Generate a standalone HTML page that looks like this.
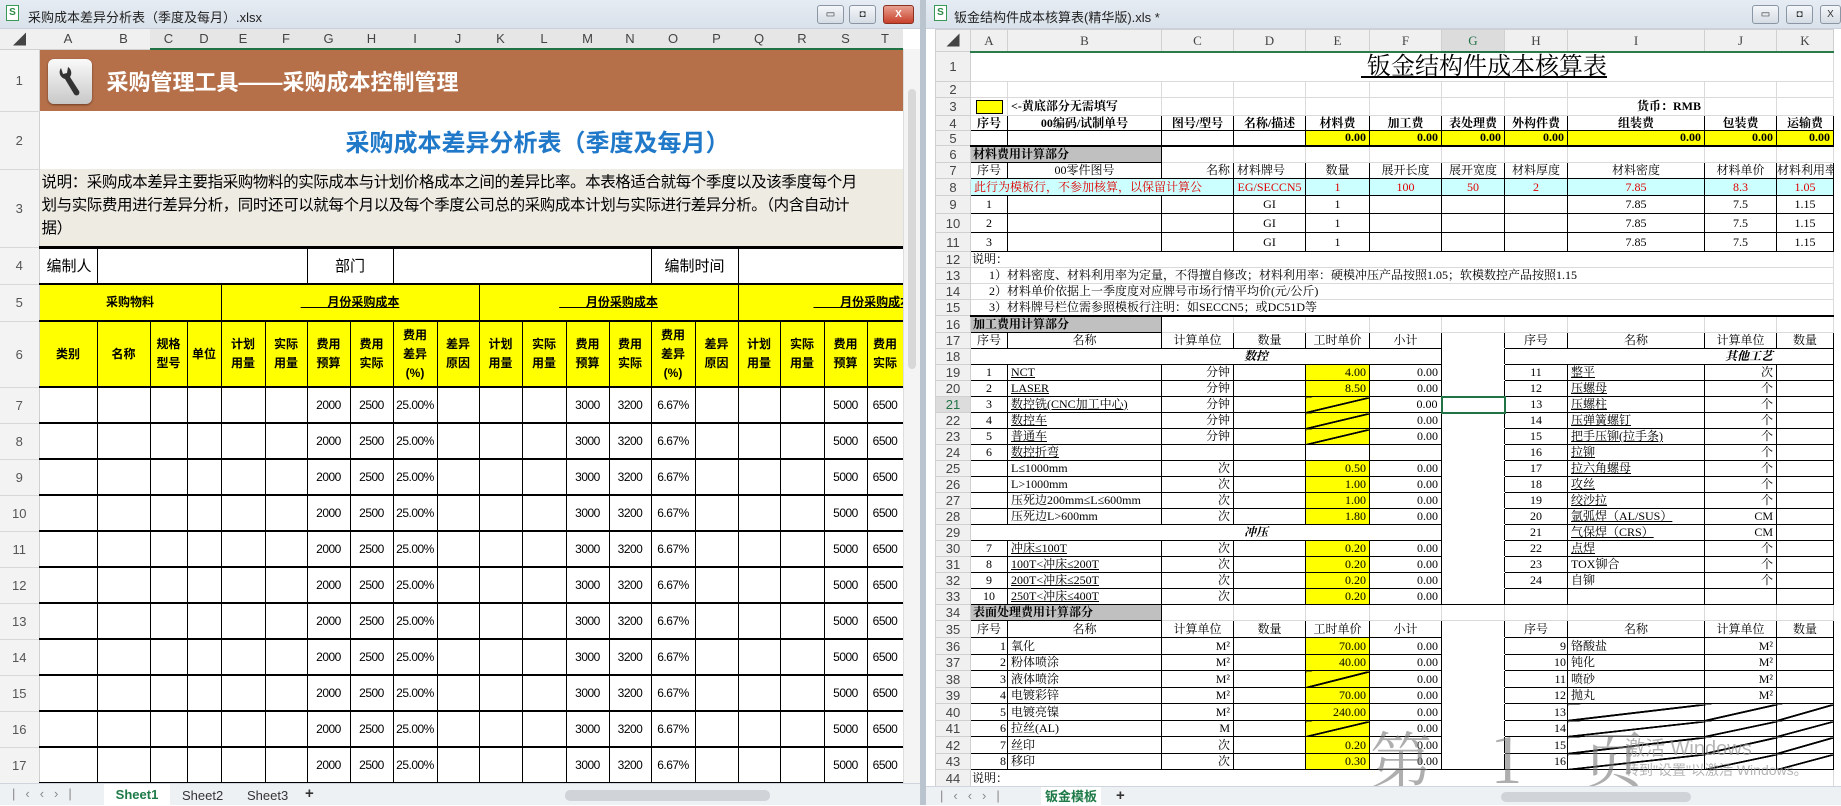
<!DOCTYPE html>
<html><head><meta charset="utf-8">
<style>
*{margin:0;padding:0;box-sizing:border-box}
body{width:1841px;height:805px;overflow:hidden;background:#fff;font-family:"Liberation Sans","Noto Sans CJK SC",sans-serif;position:relative}
.abs{position:absolute}
table{border-collapse:collapse;table-layout:fixed}
td{padding:0;overflow:hidden;white-space:nowrap;vertical-align:middle}
.tb{background:linear-gradient(#e6ecf3,#d9e1ea);height:29px;border-bottom:1px solid #c9d2dc}
.tb .t{position:absolute;left:28px;top:7px;font-size:13px;color:#222}
.xi{position:absolute;top:5px;width:13px;height:16px;background:#fff;border:1px solid #3a9a55;color:#2a8a45;font-size:10px;font-weight:bold;text-align:center;line-height:14px}
.btn{position:absolute;top:5px;width:27px;height:19px;border:1px solid #8a96a4;border-radius:3px;background:linear-gradient(#f5f7fa,#d5dce4);font-size:10px;text-align:center;line-height:17px;color:#333}
.btn.x{background:linear-gradient(#e8a090,#c8412c);color:#fff;font-weight:bold;border-color:#8a3020}
#L td{font-size:13px;text-align:center;color:#000}
#L .ch td{background:#f0f0f0;color:#444;font-size:13px;border-bottom:1px solid #d0d0d0}
#L .ch td.s{border-bottom:2px solid #217346;background:#e6e6e6}
#L td.rh{background:#f3f3f3;color:#555;border-right:1px solid #d0d0d0;border-bottom:1px solid #d8d8d8;font-size:13px}
#L .g td.c{border:1px solid #000;border-bottom:2px solid #000}
#L .y td.c{background:#ff0;font-weight:bold;border:1px solid #000;border-bottom:2px solid #000;font-size:12px;line-height:19px}
#L .d td.c{border-left:1px solid #000;border-right:1px solid #000;border-bottom:2px solid #000;font-size:12px;letter-spacing:-0.5px}
#R td{font-family:"Liberation Serif","Noto Serif CJK SC",serif;font-size:12px;border:1px solid #dadada;text-align:center;color:#000;line-height:13px}
#R .ch td{background:#f0f0f0;color:#444;border-color:#d0d0d0;font-size:13px}
#R td.rh{background:#f0f0f0;color:#444;border-color:#d0d0d0;font-size:13px;font-family:"Liberation Sans",sans-serif}
#R .b td:not(.rh){border:1px solid #000}
#R .yl{background:#ff0}
#R .r{text-align:right;padding-right:3px}
#R .l{text-align:left;padding-left:3px}
#R .u{text-decoration:underline}
#R .sec{background:#c0c0c0;font-weight:bold;text-align:left;padding-left:2px;border:1px solid #000;border-top:2px solid #000}
#R .tt{border-top:2px solid #000}
#R .sl{background:#ff0 linear-gradient(to bottom right,transparent 47%,#000 48%,#000 53%,transparent 54%)}
#R .dg{background:linear-gradient(to bottom right,transparent 47%,#000 48%,#000 53%,transparent 54%)}
#R .cy td:not(.rh){background:#ccffff;color:#e00000}
#R .hd td:not(.rh){font-weight:bold}
.tabs{background:#eef1f4;border-top:1px solid #cfd5dc;height:22px}
</style></head><body>

<div class="abs tb" style="left:0;top:0;width:920px">
<div class="xi" style="left:6px">S</div>
<div class="t">采购成本差异分析表（季度及每月）.xlsx</div>
<div class="btn" style="left:817px">▭</div><div class="btn" style="left:849px">◘</div><div class="btn x" style="left:883px;width:31px">X</div>
</div>

<div id="L" class="abs" style="left:0;top:29px;width:903px;height:754px;overflow:hidden">
<table style="width:903px">
<colgroup><col style="width:39px"><col style="width:58px"><col style="width:53px"><col style="width:37px"><col style="width:34px"><col style="width:44px"><col style="width:42px"><col style="width:43px"><col style="width:43px"><col style="width:44px"><col style="width:42px"><col style="width:43px"><col style="width:44px"><col style="width:43px"><col style="width:42px"><col style="width:44px"><col style="width:43px"><col style="width:42px"><col style="width:44px"><col style="width:43px"><col style="width:36px"></colgroup>
<tr class="ch" style="height:20px"><td>◢</td><td>A</td><td>B</td><td class="s">C</td><td class="s">D</td><td class="s">E</td><td class="s">F</td><td class="s">G</td><td class="s">H</td><td class="s">I</td><td class="s">J</td><td class="s">K</td><td class="s">L</td><td class="s">M</td><td class="s">N</td><td class="s">O</td><td class="s">P</td><td class="s">Q</td><td class="s">R</td><td class="s">S</td><td class="s">T</td></tr>
<tr style="height:62px"><td class="rh">1</td><td colspan="20" style="background:#b5704a;text-align:left;position:relative">
<div style="position:absolute;left:8px;top:9px;width:44px;height:45px;border-radius:6px;background:linear-gradient(#fafafa,#c8c8c8);box-shadow:0 1px 2px #6a3a20">
<svg width="44" height="45" viewBox="0 0 44 45"><path d="M13 9 a7 7 0 0 0 4 11 l9 15 a2.5 2.5 0 0 0 5 -3 l-9 -14 a7 7 0 0 0 -2 -10 l-1 6 -4 1 z" fill="#333"/></svg></div>
<span style="position:absolute;left:67px;top:15px;color:#fff;font-size:22px;font-weight:bold">采购管理工具——采购成本控制管理</span></td></tr>
<tr style="height:58px"><td class="rh">2</td><td colspan="20" style="text-align:left;padding-left:306px;color:#1f78c8;font-size:24px;font-weight:bold">采购成本差异分析表（季度及每月）</td></tr>
<tr style="height:78px"><td class="rh">3</td><td colspan="20" style="background:#eeebe3;border-bottom:3px solid #000;text-align:left;font-size:15.5px;line-height:23px;padding-left:2px;padding-top:2px;vertical-align:top;letter-spacing:-0.4px">说明：采购成本差异主要指采购物料的实际成本与计划价格成本之间的差异比率。本表格适合就每个季度以及该季度每个月<br>划与实际费用进行差异分析，同时还可以就每个月以及每个季度公司总的采购成本计划与实际进行差异分析。（内含自动计<br>据）</td></tr>
<tr class="g" style="height:37px"><td class="rh">4</td><td class="c" style="font-size:15px;text-align:left;padding-left:7px">编制人</td><td class="c" colspan="5"></td><td class="c" colspan="2" style="font-size:15px">部门</td><td class="c" colspan="6"></td><td class="c" colspan="2" style="font-size:15px">编制时间</td><td class="c" colspan="4"></td></tr>
<tr class="y" style="height:37px"><td class="rh">5</td><td class="c" colspan="4">采购物料</td><td class="c" colspan="6"><u>&nbsp;&nbsp;&nbsp;&nbsp;&nbsp;&nbsp;&nbsp;&nbsp;月份采购成本</u></td><td class="c" colspan="6"><u>&nbsp;&nbsp;&nbsp;&nbsp;&nbsp;&nbsp;&nbsp;&nbsp;月份采购成本</u></td><td class="c" colspan="4" style="text-align:left;padding-left:75px"><u>&nbsp;&nbsp;&nbsp;&nbsp;&nbsp;&nbsp;&nbsp;&nbsp;月份采购成本</u></td></tr>
<tr class="y" style="height:66px"><td class="rh">6</td><td class="c">类别</td><td class="c">名称</td><td class="c">规格<br>型号</td><td class="c">单位</td><td class="c">计划<br>用量</td><td class="c">实际<br>用量</td><td class="c">费用<br>预算</td><td class="c">费用<br>实际</td><td class="c">费用<br>差异<br>(%)</td><td class="c">差异<br>原因</td><td class="c">计划<br>用量</td><td class="c">实际<br>用量</td><td class="c">费用<br>预算</td><td class="c">费用<br>实际</td><td class="c">费用<br>差异<br>(%)</td><td class="c">差异<br>原因</td><td class="c">计划<br>用量</td><td class="c">实际<br>用量</td><td class="c">费用<br>预算</td><td class="c">费用<br>实际</td></tr>
<tr class="d" style="height:36px"><td class="rh">7</td><td class="c"></td><td class="c"></td><td class="c"></td><td class="c"></td><td class="c"></td><td class="c"></td><td class="c">2000</td><td class="c">2500</td><td class="c">25.00%</td><td class="c"></td><td class="c"></td><td class="c"></td><td class="c">3000</td><td class="c">3200</td><td class="c">6.67%</td><td class="c"></td><td class="c"></td><td class="c"></td><td class="c">5000</td><td class="c">6500</td></tr>
<tr class="d" style="height:36px"><td class="rh">8</td><td class="c"></td><td class="c"></td><td class="c"></td><td class="c"></td><td class="c"></td><td class="c"></td><td class="c">2000</td><td class="c">2500</td><td class="c">25.00%</td><td class="c"></td><td class="c"></td><td class="c"></td><td class="c">3000</td><td class="c">3200</td><td class="c">6.67%</td><td class="c"></td><td class="c"></td><td class="c"></td><td class="c">5000</td><td class="c">6500</td></tr>
<tr class="d" style="height:36px"><td class="rh">9</td><td class="c"></td><td class="c"></td><td class="c"></td><td class="c"></td><td class="c"></td><td class="c"></td><td class="c">2000</td><td class="c">2500</td><td class="c">25.00%</td><td class="c"></td><td class="c"></td><td class="c"></td><td class="c">3000</td><td class="c">3200</td><td class="c">6.67%</td><td class="c"></td><td class="c"></td><td class="c"></td><td class="c">5000</td><td class="c">6500</td></tr>
<tr class="d" style="height:36px"><td class="rh">10</td><td class="c"></td><td class="c"></td><td class="c"></td><td class="c"></td><td class="c"></td><td class="c"></td><td class="c">2000</td><td class="c">2500</td><td class="c">25.00%</td><td class="c"></td><td class="c"></td><td class="c"></td><td class="c">3000</td><td class="c">3200</td><td class="c">6.67%</td><td class="c"></td><td class="c"></td><td class="c"></td><td class="c">5000</td><td class="c">6500</td></tr>
<tr class="d" style="height:36px"><td class="rh">11</td><td class="c"></td><td class="c"></td><td class="c"></td><td class="c"></td><td class="c"></td><td class="c"></td><td class="c">2000</td><td class="c">2500</td><td class="c">25.00%</td><td class="c"></td><td class="c"></td><td class="c"></td><td class="c">3000</td><td class="c">3200</td><td class="c">6.67%</td><td class="c"></td><td class="c"></td><td class="c"></td><td class="c">5000</td><td class="c">6500</td></tr>
<tr class="d" style="height:36px"><td class="rh">12</td><td class="c"></td><td class="c"></td><td class="c"></td><td class="c"></td><td class="c"></td><td class="c"></td><td class="c">2000</td><td class="c">2500</td><td class="c">25.00%</td><td class="c"></td><td class="c"></td><td class="c"></td><td class="c">3000</td><td class="c">3200</td><td class="c">6.67%</td><td class="c"></td><td class="c"></td><td class="c"></td><td class="c">5000</td><td class="c">6500</td></tr>
<tr class="d" style="height:36px"><td class="rh">13</td><td class="c"></td><td class="c"></td><td class="c"></td><td class="c"></td><td class="c"></td><td class="c"></td><td class="c">2000</td><td class="c">2500</td><td class="c">25.00%</td><td class="c"></td><td class="c"></td><td class="c"></td><td class="c">3000</td><td class="c">3200</td><td class="c">6.67%</td><td class="c"></td><td class="c"></td><td class="c"></td><td class="c">5000</td><td class="c">6500</td></tr>
<tr class="d" style="height:36px"><td class="rh">14</td><td class="c"></td><td class="c"></td><td class="c"></td><td class="c"></td><td class="c"></td><td class="c"></td><td class="c">2000</td><td class="c">2500</td><td class="c">25.00%</td><td class="c"></td><td class="c"></td><td class="c"></td><td class="c">3000</td><td class="c">3200</td><td class="c">6.67%</td><td class="c"></td><td class="c"></td><td class="c"></td><td class="c">5000</td><td class="c">6500</td></tr>
<tr class="d" style="height:36px"><td class="rh">15</td><td class="c"></td><td class="c"></td><td class="c"></td><td class="c"></td><td class="c"></td><td class="c"></td><td class="c">2000</td><td class="c">2500</td><td class="c">25.00%</td><td class="c"></td><td class="c"></td><td class="c"></td><td class="c">3000</td><td class="c">3200</td><td class="c">6.67%</td><td class="c"></td><td class="c"></td><td class="c"></td><td class="c">5000</td><td class="c">6500</td></tr>
<tr class="d" style="height:36px"><td class="rh">16</td><td class="c"></td><td class="c"></td><td class="c"></td><td class="c"></td><td class="c"></td><td class="c"></td><td class="c">2000</td><td class="c">2500</td><td class="c">25.00%</td><td class="c"></td><td class="c"></td><td class="c"></td><td class="c">3000</td><td class="c">3200</td><td class="c">6.67%</td><td class="c"></td><td class="c"></td><td class="c"></td><td class="c">5000</td><td class="c">6500</td></tr>
<tr class="d" style="height:36px"><td class="rh">17</td><td class="c"></td><td class="c"></td><td class="c"></td><td class="c"></td><td class="c"></td><td class="c"></td><td class="c">2000</td><td class="c">2500</td><td class="c">25.00%</td><td class="c"></td><td class="c"></td><td class="c"></td><td class="c">3000</td><td class="c">3200</td><td class="c">6.67%</td><td class="c"></td><td class="c"></td><td class="c"></td><td class="c">5000</td><td class="c">6500</td></tr>
</table></div>
<div class="abs" style="left:903px;top:49px;width:17px;height:734px;background:#f4f4f4;border-left:1px solid #ddd"><div style="margin:40px 4px 0;height:280px;background:#d8d8d8;border-radius:4px"></div></div>
<div class="abs tabs" style="left:0;top:783px;width:920px">
<span class="abs" style="left:12px;top:2px;font-size:13px;color:#888;letter-spacing:10px">|‹‹›|</span>
<div class="abs" style="left:104px;top:0;width:66px;height:22px;background:#fff;color:#1e7a46;font-weight:bold;font-size:13px;text-align:center;line-height:22px">Sheet1</div>
<span class="abs" style="left:182px;top:4px;font-size:13px;color:#333">Sheet2</span>
<span class="abs" style="left:247px;top:4px;font-size:13px;color:#333">Sheet3</span>
<span class="abs" style="left:305px;top:1px;font-size:15px;font-weight:bold;color:#333">+</span>
<div class="abs" style="left:565px;top:6px;width:205px;height:11px;background:#d0d4d8;border-radius:5px"></div>
</div>
<div class="abs" style="left:920px;top:0;width:6px;height:805px;background:#b9c4cf"></div>

<div class="abs tb" style="left:926px;top:0;width:915px">
<div class="xi" style="left:8px">S</div>
<div class="t" style="left:28px">钣金结构件成本核算表(精华版).xls *</div>
<div class="btn" style="left:826px">▭</div><div class="btn" style="left:860px">◘</div><div class="btn" style="left:894px;width:21px">X</div>
</div>

<div id="R" class="abs" style="left:935px;top:29px;width:906px;height:757px;overflow:hidden">
<table style="width:898px">
<colgroup><col style="width:35px"><col style="width:37px"><col style="width:154px"><col style="width:72px"><col style="width:72px"><col style="width:64px"><col style="width:72px"><col style="width:63px"><col style="width:63px"><col style="width:137px"><col style="width:72px"><col style="width:57px"></colgroup>
<tr class="ch" style="height:22px"><td>◢</td><td>A</td><td>B</td><td>C</td><td>D</td><td>E</td><td>F</td><td style="background:#dcdcdc;border-bottom:2px solid #217346;color:#217346">G</td><td>H</td><td>I</td><td>J</td><td>K</td></tr>
<tr style="height:30px"><td class="rh">1</td><td colspan="11" style="text-align:left;padding-left:390px;font-size:24px;line-height:28px;border-top:2px solid #2a7a4a"><u>&nbsp;钣金结构件成本核算表</u></td></tr>
<tr style="height:16px"><td class="rh">2</td><td></td><td></td><td></td><td></td><td></td><td></td><td></td><td></td><td></td><td></td><td></td></tr>
<tr style="height:18px"><td class="rh">3</td><td><div style="width:27px;height:14px;background:#ff0;border:1px solid #000;margin:0 auto"></div></td><td class="l" style="font-weight:bold">&lt;-黄底部分无需填写</td><td></td><td></td><td></td><td></td><td></td><td></td><td class="r" style="font-weight:bold">货币：RMB</td><td></td><td></td></tr>
<tr class="b hd" style="height:15px"><td class="rh">4</td><td>序号</td><td>00编码/试制单号</td><td>图号/型号</td><td>名称/描述</td><td>材料费</td><td>加工费</td><td>表处理费</td><td>外构件费</td><td>组装费</td><td>包装费</td><td>运输费</td></tr>
<tr class="b hd" style="height:15px"><td class="rh">5</td><td></td><td></td><td></td><td></td><td class="yl r">0.00</td><td class="yl r">0.00</td><td class="yl r">0.00</td><td class="yl r">0.00</td><td class="yl r">0.00</td><td class="yl r">0.00</td><td class="yl r">0.00</td></tr>
<tr style="height:17px"><td class="rh">6</td><td colspan="2" class="sec">材料费用计算部分</td><td class="tt"></td><td class="tt"></td><td class="tt"></td><td class="tt"></td><td class="tt"></td><td class="tt"></td><td class="tt"></td><td class="tt"></td><td class="tt"></td></tr>
<tr class="b" style="height:16px"><td class="rh">7</td><td>序号</td><td>00零件图号</td><td class="r">名称</td><td class="l">材料牌号</td><td>数量</td><td>展开长度</td><td>展开宽度</td><td>材料厚度</td><td>材料密度</td><td>材料单价</td><td>材料利用率</td></tr>
<tr class="b cy" style="height:17px"><td class="rh">8</td><td colspan="3" class="l">此行为模板行，不参加核算，以保留计算公</td><td>EG/SECCN5</td><td>1</td><td>100</td><td>50</td><td>2</td><td>7.85</td><td>8.3</td><td>1.05</td></tr>
<tr class="b" style="height:18px"><td class="rh">9</td><td>1</td><td></td><td></td><td>GI</td><td>1</td><td></td><td></td><td></td><td>7.85</td><td>7.5</td><td>1.15</td></tr>
<tr class="b" style="height:19px"><td class="rh">10</td><td>2</td><td></td><td></td><td>GI</td><td>1</td><td></td><td></td><td></td><td>7.85</td><td>7.5</td><td>1.15</td></tr>
<tr class="b" style="height:19px"><td class="rh">11</td><td>3</td><td></td><td></td><td>GI</td><td>1</td><td></td><td></td><td></td><td>7.85</td><td>7.5</td><td>1.15</td></tr>
<tr style="height:16px"><td class="rh">12</td><td colspan="11" class="l" style="padding-left:1px">说明：</td></tr>
<tr style="height:16px"><td class="rh">13</td><td colspan="11" class="l" style="padding-left:18px">1）材料密度、材料利用率为定量，不得擅自修改；材料利用率：硬模冲压产品按照1.05；软模数控产品按照1.15</td></tr>
<tr style="height:16px"><td class="rh">14</td><td colspan="11" class="l" style="padding-left:18px">2）材料单价依据上一季度度对应牌号市场行情平均价(元/公斤)</td></tr>
<tr style="height:16px"><td class="rh">15</td><td colspan="11" class="l" style="padding-left:18px">3）材料牌号栏位需参照模板行注明：如SECCN5；或DC51D等</td></tr>
<tr style="height:17px"><td class="rh">16</td><td colspan="2" class="sec">加工费用计算部分</td><td class="tt"></td><td class="tt"></td><td class="tt"></td><td class="tt"></td><td class="tt"></td><td class="tt"></td><td class="tt"></td><td class="tt"></td><td class="tt"></td></tr>
<tr class="b" style="height:16px"><td class="rh">17</td><td>序号</td><td>名称</td><td>计算单位</td><td>数量</td><td>工时单价</td><td>小计</td><td style="border-bottom-color:#fff"></td><td>序号</td><td>名称</td><td>计算单位</td><td>数量</td></tr>
<tr class="b" style="height:16px"><td class="rh">18</td><td colspan="6" style="font-weight:bold;font-style:italic;padding-left:100px">数控</td><td style="border-top-color:#fff;border-bottom-color:#fff"></td><td colspan="4" style="font-weight:bold;font-style:italic;padding-left:160px">其他工艺</td></tr>
<tr class="b" style="height:16px"><td class="rh">19</td><td>1</td><td class="l u">NCT</td><td class="r">分钟</td><td></td><td class="yl r">4.00</td><td class="r">0.00</td><td style="border-top-color:#fff;border-bottom-color:#fff"></td><td>11</td><td class="l u">整平</td><td class="r">次</td><td></td></tr>
<tr class="b" style="height:16px"><td class="rh">20</td><td>2</td><td class="l u">LASER</td><td class="r">分钟</td><td></td><td class="yl r">8.50</td><td class="r">0.00</td><td style="border-top-color:#fff;border-bottom-color:#fff"></td><td>12</td><td class="l u">压螺母</td><td class="r">个</td><td></td></tr>
<tr class="b" style="height:16px"><td class="rh" style="color:#217346;background:#dcdcdc">21</td><td>3</td><td class="l u">数控铣(CNC加工中心)</td><td class="r">分钟</td><td></td><td class="sl"></td><td class="r">0.00</td><td style="border:2px solid #217346"></td><td>13</td><td class="l u">压螺柱</td><td class="r">个</td><td></td></tr>
<tr class="b" style="height:16px"><td class="rh">22</td><td>4</td><td class="l u">数控车</td><td class="r">分钟</td><td></td><td class="sl"></td><td class="r">0.00</td><td style="border-top-color:#fff;border-bottom-color:#fff"></td><td>14</td><td class="l u">压弹簧螺钉</td><td class="r">个</td><td></td></tr>
<tr class="b" style="height:16px"><td class="rh">23</td><td>5</td><td class="l u">普通车</td><td class="r">分钟</td><td></td><td class="sl"></td><td class="r">0.00</td><td style="border-top-color:#fff;border-bottom-color:#fff"></td><td>15</td><td class="l u">把手压铆(拉手条)</td><td class="r">个</td><td></td></tr>
<tr class="b" style="height:16px"><td class="rh">24</td><td>6</td><td class="l u">数控折弯</td><td></td><td></td><td></td><td></td><td style="border-top-color:#fff;border-bottom-color:#fff"></td><td>16</td><td class="l u">拉铆</td><td class="r">个</td><td></td></tr>
<tr class="b" style="height:16px"><td class="rh">25</td><td></td><td class="l">L≤1000mm</td><td class="r">次</td><td></td><td class="yl r">0.50</td><td class="r">0.00</td><td style="border-top-color:#fff;border-bottom-color:#fff"></td><td>17</td><td class="l u">拉六角螺母</td><td class="r">个</td><td></td></tr>
<tr class="b" style="height:16px"><td class="rh">26</td><td></td><td class="l">L&gt;1000mm</td><td class="r">次</td><td></td><td class="yl r">1.00</td><td class="r">0.00</td><td style="border-top-color:#fff;border-bottom-color:#fff"></td><td>18</td><td class="l u">攻丝</td><td class="r">个</td><td></td></tr>
<tr class="b" style="height:16px"><td class="rh">27</td><td></td><td class="l">压死边200mm≤L≤600mm</td><td class="r">次</td><td></td><td class="yl r">1.00</td><td class="r">0.00</td><td style="border-top-color:#fff;border-bottom-color:#fff"></td><td>19</td><td class="l u">绞沙拉</td><td class="r">个</td><td></td></tr>
<tr class="b" style="height:16px"><td class="rh">28</td><td></td><td class="l">压死边L&gt;600mm</td><td class="r">次</td><td></td><td class="yl r">1.80</td><td class="r">0.00</td><td style="border-top-color:#fff;border-bottom-color:#fff"></td><td>20</td><td class="l u">氩弧焊（AL/SUS）</td><td class="r">CM</td><td></td></tr>
<tr class="b" style="height:16px"><td class="rh">29</td><td colspan="6" style="font-weight:bold;font-style:italic;padding-left:100px">冲压</td><td style="border-top-color:#fff;border-bottom-color:#fff"></td><td>21</td><td class="l u">气保焊（CRS）</td><td class="r">CM</td><td></td></tr>
<tr class="b" style="height:16px"><td class="rh">30</td><td>7</td><td class="l u">冲床≤100T</td><td class="r">次</td><td></td><td class="yl r">0.20</td><td class="r">0.00</td><td style="border-top-color:#fff;border-bottom-color:#fff"></td><td>22</td><td class="l u">点焊</td><td class="r">个</td><td></td></tr>
<tr class="b" style="height:16px"><td class="rh">31</td><td>8</td><td class="l u">100T&lt;冲床≤200T</td><td class="r">次</td><td></td><td class="yl r">0.20</td><td class="r">0.00</td><td style="border-top-color:#fff;border-bottom-color:#fff"></td><td>23</td><td class="l">TOX铆合</td><td class="r">个</td><td></td></tr>
<tr class="b" style="height:16px"><td class="rh">32</td><td>9</td><td class="l u">200T&lt;冲床≤250T</td><td class="r">次</td><td></td><td class="yl r">0.20</td><td class="r">0.00</td><td style="border-top-color:#fff;border-bottom-color:#fff"></td><td>24</td><td class="l">自铆</td><td class="r">个</td><td></td></tr>
<tr class="b" style="height:16px"><td class="rh">33</td><td>10</td><td class="l u">250T&lt;冲床≤400T</td><td class="r">次</td><td></td><td class="yl r">0.20</td><td class="r">0.00</td><td style="border-top-color:#fff"></td><td></td><td></td><td></td><td></td></tr>
<tr style="height:16px"><td class="rh">34</td><td colspan="2" class="sec" style="border-top:1px solid #000">表面处理费用计算部分</td><td></td><td></td><td></td><td></td><td></td><td></td><td></td><td></td><td></td></tr>
<tr class="b" style="height:17px"><td class="rh">35</td><td>序号</td><td>名称</td><td>计算单位</td><td>数量</td><td>工时单价</td><td>小计</td><td style="border-color:#fff #000"></td><td>序号</td><td>名称</td><td>计算单位</td><td>数量</td></tr>
<tr class="b" style="height:17px"><td class="rh">36</td><td class="r" style="padding-right:1px">1</td><td class="l">氧化</td><td class="r">M²</td><td></td><td class="yl r">70.00</td><td class="r">0.00</td><td style="border-color:#fff #000"></td><td class="r" style="padding-right:1px">9</td><td class="l">铬酸盐</td><td class="r">M²</td><td></td></tr>
<tr class="b" style="height:16px"><td class="rh">37</td><td class="r" style="padding-right:1px">2</td><td class="l">粉体喷涂</td><td class="r">M²</td><td></td><td class="yl r">40.00</td><td class="r">0.00</td><td style="border-color:#fff #000"></td><td class="r" style="padding-right:1px">10</td><td class="l">钝化</td><td class="r">M²</td><td></td></tr>
<tr class="b" style="height:17px"><td class="rh">38</td><td class="r" style="padding-right:1px">3</td><td class="l">液体喷涂</td><td class="r">M²</td><td></td><td class="sl"></td><td class="r">0.00</td><td style="border-color:#fff #000"></td><td class="r" style="padding-right:1px">11</td><td class="l">喷砂</td><td class="r">M²</td><td></td></tr>
<tr class="b" style="height:16px"><td class="rh">39</td><td class="r" style="padding-right:1px">4</td><td class="l">电镀彩锌</td><td class="r">M²</td><td></td><td class="yl r">70.00</td><td class="r">0.00</td><td style="border-color:#fff #000"></td><td class="r" style="padding-right:1px">12</td><td class="l">抛丸</td><td class="r">M²</td><td></td></tr>
<tr class="b" style="height:17px"><td class="rh">40</td><td class="r" style="padding-right:1px">5</td><td class="l">电镀亮镍</td><td class="r">M²</td><td></td><td class="yl r">240.00</td><td class="r">0.00</td><td style="border-color:#fff #000"></td><td class="r" style="padding-right:1px">13</td><td class="dg"></td><td class="dg"></td><td class="dg"></td></tr>
<tr class="b" style="height:16px"><td class="rh">41</td><td class="r" style="padding-right:1px">6</td><td class="l">拉丝(AL)</td><td class="r">M</td><td></td><td class="sl"></td><td class="r">0.00</td><td style="border-color:#fff #000"></td><td class="r" style="padding-right:1px">14</td><td class="dg"></td><td class="dg"></td><td class="dg"></td></tr>
<tr class="b" style="height:17px"><td class="rh">42</td><td class="r" style="padding-right:1px">7</td><td class="l">丝印</td><td class="r">次</td><td></td><td class="yl r">0.20</td><td class="r">0.00</td><td style="border-color:#fff #000"></td><td class="r" style="padding-right:1px">15</td><td class="dg"></td><td class="dg"></td><td class="dg"></td></tr>
<tr class="b" style="height:16px"><td class="rh">43</td><td class="r" style="padding-right:1px">8</td><td class="l">移印</td><td class="r">次</td><td></td><td class="yl r">0.30</td><td class="r">0.00</td><td style="border-color:#fff #000 #000"></td><td class="r" style="padding-right:1px">16</td><td class="dg"></td><td class="dg"></td><td class="dg"></td></tr>
<tr style="height:17px"><td class="rh">44</td><td colspan="11" class="l" style="padding-left:1px">说明：</td></tr>
</table></div>
<div class="abs" style="left:1370px;top:712px;font-family:'Noto Serif CJK SC',serif;font-size:62px;color:rgba(120,120,120,0.6);letter-spacing:22px">第 1 页</div>
<div class="abs" style="left:1625px;top:732px;font-size:20px;color:rgba(150,150,150,0.7)">激活 Windows</div>
<div class="abs" style="left:1625px;top:760px;font-size:14px;color:rgba(150,150,150,0.7)">转到"设置"以激活 Windows。</div>
<div class="abs tabs" style="left:926px;top:786px;width:915px;height:19px">
<span class="abs" style="left:14px;top:1px;font-size:13px;color:#888;letter-spacing:10px">|‹‹›|</span>
<div class="abs" style="left:115px;top:0;width:60px;height:19px;background:#fff;color:#1e7a46;font-weight:bold;font-size:13px;text-align:center;line-height:19px">钣金模板</div>
<span class="abs" style="left:190px;top:0;font-size:15px;font-weight:bold;color:#333">+</span>
<div class="abs" style="left:575px;top:5px;width:190px;height:10px;background:#d0d4d8;border-radius:5px"></div>
</div>
</body></html>
